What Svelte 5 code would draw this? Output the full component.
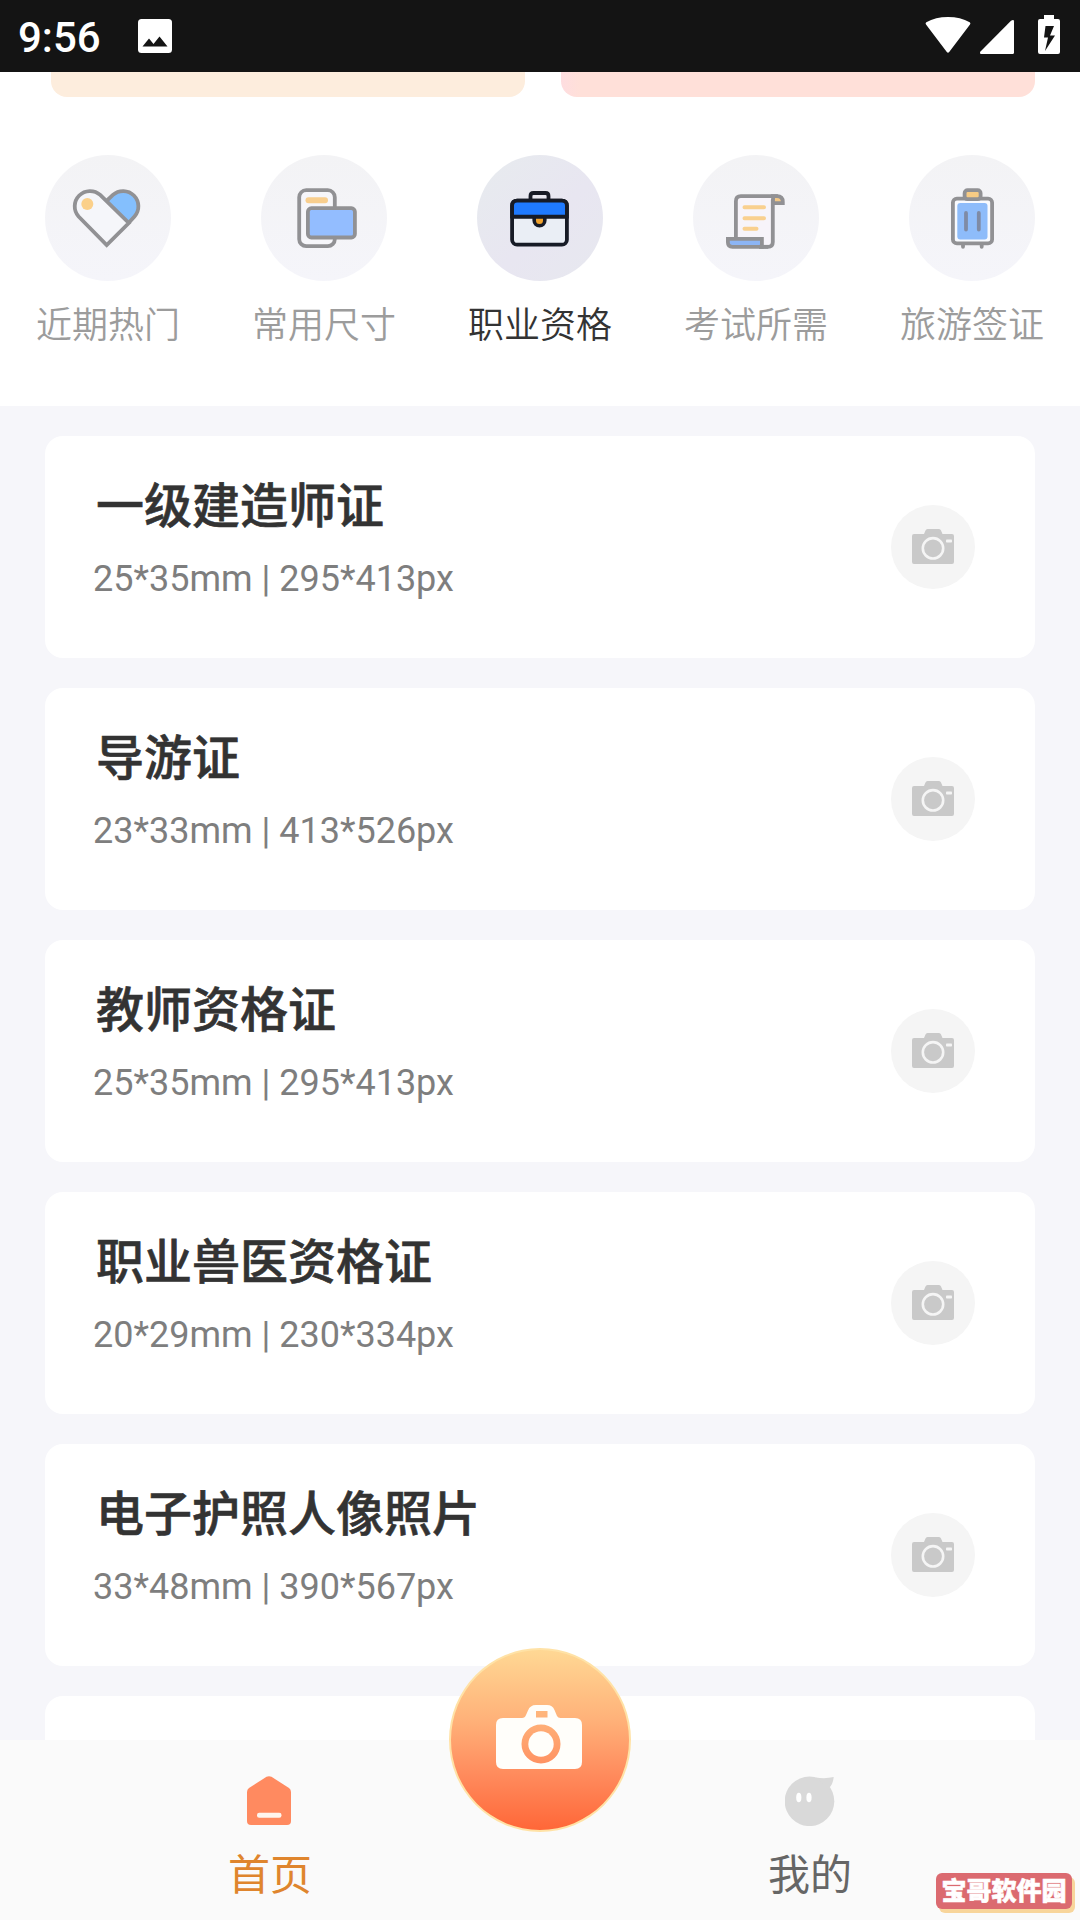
<script>
  let activeTab = 2;

  const tabs = [
    { icon: "heart", label: "近期热门" },
    { icon: "size", label: "常用尺寸" },
    { icon: "briefcase", label: "职业资格" },
    { icon: "scroll", label: "考试所需" },
    { icon: "luggage", label: "旅游签证" },
  ];

  const items = [
    { title: "一级建造师证", size: "25*35mm | 295*413px" },
    { title: "导游证", size: "23*33mm | 413*526px" },
    { title: "教师资格证", size: "25*35mm | 295*413px" },
    { title: "职业兽医资格证", size: "20*29mm | 230*334px" },
    { title: "电子护照人像照片", size: "33*48mm | 390*567px" },
  ];
</script>

<div class="screen">
  <header class="status-bar">
    <span class="time">9:56</span>
    <svg class="picture" width="34" height="34" viewBox="0 0 34 34">
      <rect width="34" height="34" rx="3.5" fill="#fff" />
      <path d="M4.5 27.5 L11 19.5 L15.5 25 L21.5 17.5 L29.5 27.5 Z" fill="#141414" />
    </svg>
    <svg class="system" width="136" height="40" viewBox="0 0 136 40">
      <path d="M1 9.5 Q0 8.3 1.3 7.3 Q10.500 2 23 2 Q35.500 2 44.7 7.3 Q46 8.300 45 9.500 L24.2 37 Q23 38.500 21.800 37 Z" />
      <path d="M56.500 39 Q54 39 55.500 36.500 L86 5.800 Q89 4 89 6.500 V37.500 Q89 39 87.500 39 Z" />
      <path fill-rule="evenodd" d="M119 0 H129 V4 H133 Q135 4 135 6 V37 Q135 39 133 39 H115 Q113 39 113 37 V6 Q113 4 115 4 H119 Z M120.500 11 L119 22.500 H123 L120 36 L130 20.500 H125 L129 11 Z" />
    </svg>
  </header>

  <section class="top">
    <div class="banners">
      <div class="banner orange"></div>
      <div class="banner pink"></div>
    </div>
    <nav class="tabs">
      {#each tabs as tab, i}
        <button class="tab" class:active={i === activeTab} on:click={() => (activeTab = i)}>
          <span class="tab-icon">
            <svg width="126" height="126" viewBox="0 0 126 126" fill="none" stroke="#919194" stroke-width="3.8">
              {#if tab.icon === "heart"}
                <path d="M61.500 46 L67.900 39.900 A15.300 15.300 0 0 1 89.500 61.500 L84 67.500" fill="#84bffd" />
                <path d="M33.600 61.500 A15.300 15.300 0 0 1 55.200 39.900 L83.800 68 L61.700 90 Z" fill="#f5f6fa" />
                <circle cx="42.300" cy="49" r="6" fill="#fbd08a" stroke="none" />
              {:else if tab.icon === "size"}
                <rect x="38.200" y="35.200" width="35.600" height="56" rx="7" fill="#f6f6fa" />
                <path d="M47.500 45.300 H64" stroke="#f8ce8e" stroke-width="6" stroke-linecap="round" />
                <rect x="46.900" y="53.200" width="47" height="29.300" rx="3.500" fill="#93bdff" />
              {:else if tab.icon === "briefcase"}
                <g stroke="#171b26">
                  <path d="M53.500 45 V41 Q53.500 38 56.500 38 H68.500 Q71.500 38 71.500 41 V45" />
                  <rect x="35.100" y="45.700" width="54.800" height="44" rx="5" fill="#eaeef5" />
                  <path d="M35.100 61.700 V50.700 Q35.100 45.700 40.100 45.700 H84.900 Q89.900 45.700 89.900 50.700 V61.700 Z" fill="#1f7aff" />
                  <path d="M57.200 61.700 V65.500 A5.300 5.300 0 0 0 67.800 65.500 V61.700 Z" fill="#f2a32d" stroke-width="3.600" />
                  <path d="M35 61.700 H90" stroke-width="3.400" />
                </g>
              {:else if tab.icon === "scroll"}
                <path d="M79.800 41.200 H84 Q89.800 41.200 89.800 47 V48.200 H79.800 Z" fill="#f3c887" />
                <path d="M42.900 84 V46.200 Q42.900 41.200 47.900 41.200 H81 Q79.800 42.500 79.800 45 V87 Q79.800 91.800 75 91.800 H66" fill="#f7f4fa" />
                <path d="M34.900 83.900 H68.900 V91.800 H39.500 Q34.900 91.800 34.900 87.300 Z" fill="#8cb5f5" />
                <path d="M66 91.800 H75" />
                <path d="M51.500 52.200 H71 M51.500 63.200 H71 M51.500 73.700 H63.500" stroke="#f9d08f" stroke-width="4" stroke-linecap="round" />
              {:else}
                <path d="M54 90 V91.800 M72.700 90 V91.800" stroke-linecap="round" />
                <rect x="43.900" y="43.600" width="39.200" height="44.800" rx="4" fill="#f8fafe" />
                <rect x="48.300" y="48" width="30.200" height="36.400" rx="3" fill="#8ebcfa" stroke="none" />
                <rect x="55.600" y="35.200" width="16" height="9" rx="3" fill="#f7cb84" />
                <path d="M57 58 V74.500 M69.800 58 V74.500" stroke="#7f8ba5" stroke-linecap="round" />
              {/if}
            </svg>
          </span>
          <span class="tab-label">{tab.label}</span>
        </button>
      {/each}
    </nav>
  </section>

  <main class="list">
    {#each items as item}
      <article class="card">
        <div class="info">
          <h2>{item.title}</h2>
          <p>{item.size}</p>
        </div>
        <span class="shoot">
          <svg width="42" height="35" viewBox="0 0 42 35">
            <path d="M2 5 H12 L13.500 1.500 Q14 0 15.500 0 H27 Q28.500 0 29 1.500 L30.500 5 H40 Q42 5 42 7 V33 Q42 35 40 35 H2 Q0 35 0 33 V7 Q0 5 2 5 Z" fill="#c9c9c9" />
            <circle cx="21" cy="19.300" r="10.200" fill="none" stroke="#f5f5f5" stroke-width="2.600" />
            <rect x="34" y="10.500" width="6" height="3" rx="0.800" fill="#f5f5f5" />
          </svg>
        </span>
      </article>
    {/each}
    <article class="card"></article>
  </main>

  <footer class="bottom-nav">
    <button class="nav-item home">
      <svg width="50" height="50" viewBox="0 0 50 50">
        <path d="M21.500 0.800 Q24 -0.500 26.500 0.800 L44 12 Q46 13.500 46 16 V45 Q46 49 42 49 H6 Q2 49 2 45 V16 Q2 13.500 4 12 Z" fill="#ff8a60" />
        <rect x="12" y="36.700" width="24.500" height="5" rx="2.200" fill="#fff5ee" />
      </svg>
      <span>首页</span>
    </button>
    <button class="nav-item">
      <svg width="50" height="50" viewBox="0 0 50 50" fill="#d9d9d9">
        <circle cx="24.500" cy="25.300" r="24.800" />
        <path d="M31 1.500 Q40 3 48.700 1 Q48 8 44.500 11.500 L46 15 Z" />
        <ellipse cx="13.800" cy="21.500" rx="2.600" ry="4.800" fill="#fff" />
        <ellipse cx="24" cy="21.500" rx="2.600" ry="4.800" fill="#fff" />
      </svg>
      <span>我的</span>
    </button>
    <button class="fab" aria-label="拍照">
      <svg width="86" height="64" viewBox="0 0 86 64">
        <path fill-rule="evenodd" d="M7 13 H26 Q29 13 30 10 L32 5.500 Q34 0 40 0 H51 Q56.500 0 58.500 5 L61 11 Q62 13 64.500 13 H79 Q86 13 86 20 V57 Q86 64 79 64 H7 Q0 64 0 57 V20 Q0 13 7 13 Z M40 6 V12.500 H51.500 V6 Z M45 19.500 A19.500 19.500 0 1 0 45 58.500 A19.500 19.500 0 1 0 45 19.500 Z" fill="#fffefa" />
        <circle cx="45" cy="39" r="12.700" fill="#fffefa" />
      </svg>
    </button>
  </footer>

  <div class="badge">宝哥软件园</div>
</div>

<style>
  :global(body) {
    background: #fff;
  }

  .screen {
    position: relative;
    display: flex;
    flex-direction: column;
    width: 1080px;
    height: 1920px;
    overflow: hidden;
    background: #f6f6fa;
    font-family: Roboto, "Noto Sans CJK SC", sans-serif;
  }

  button {
    padding: 0;
    border: none;
    background: none;
    font-family: inherit;
  }

  .status-bar {
    display: flex;
    align-items: center;
    flex: none;
    box-sizing: border-box;
    height: 72px;
    padding: 0 19px 0 18px;
    background: #141414;
    color: #fff;
  }

  .time {
    width: 120px;
    padding-top: 3px;
    font-size: 42px;
    font-weight: 500;
    line-height: 48px;
  }

  .system {
    margin: 0 0 2px auto;
    fill: #fff;
  }

  .top {
    flex: none;
    height: 334px;
    background: #fff;
  }

  .banners {
    display: flex;
    justify-content: space-between;
    padding: 0 45px 0 51px;
  }

  .banner {
    width: 474px;
    height: 25px;
    border-radius: 0 0 16px 16px;
  }

  .orange {
    background: #fdeddd;
  }

  .pink {
    background: linear-gradient(90deg, #fedde0, #ffe0d9 4%);
  }

  .tabs {
    display: grid;
    grid-template-columns: repeat(5, 1fr);
    padding-top: 58px;
  }

  .tab {
    display: flex;
    flex-direction: column;
    align-items: center;
    gap: 19px;
  }

  .tab-icon {
    width: 126px;
    height: 126px;
    border-radius: 50%;
    background: linear-gradient(180deg, #f3f3f5, #f5f5fa);
  }

  .active .tab-icon {
    background: linear-gradient(135deg, #e7ebee, #e8e6f1 55%, #e7e8ef);
  }

  .tab-label {
    color: #9c9c9c;
    font-size: 36px;
    font-weight: 350;
    line-height: 52px;
  }

  .active .tab-label {
    color: #333;
  }

  .list {
    display: flex;
    flex: 1;
    flex-direction: column;
    gap: 30px;
    min-height: 0;
    padding: 30px 45px 0;
    overflow: hidden;
  }

  .card {
    display: flex;
    flex: none;
    align-items: center;
    justify-content: space-between;
    box-sizing: border-box;
    height: 222px;
    padding: 0 60px 0 48px;
    border-radius: 18px;
    background: #fff;
  }

  .info {
    height: 146px;
  }

  h2 {
    margin: 0 0 0 3px;
    color: #333;
    font-size: 48px;
    font-weight: 500;
    line-height: 66px;
    -webkit-text-stroke: 0.6px #333;
  }

  p {
    margin: 17px 0 0;
    color: #7e7e7e;
    font-size: 36px;
    line-height: 44px;
  }

  .shoot {
    display: flex;
    align-items: center;
    justify-content: center;
    box-sizing: border-box;
    width: 84px;
    height: 84px;
    padding-bottom: 2px;
    border-radius: 50%;
    background: #f5f5f5;
  }

  .bottom-nav {
    position: relative;
    display: grid;
    grid-template-columns: 1fr 1fr;
    flex: none;
    height: 180px;
    background: #fafafa;
  }

  .nav-item {
    display: flex;
    flex-direction: column;
    align-items: center;
    gap: 20px;
    padding-top: 36px;
    color: #666;
    font-size: 42px;
    line-height: 60px;
  }

  .home {
    color: #df852d;
  }

  .fab {
    position: absolute;
    top: -92px;
    left: 449px;
    display: flex;
    align-items: center;
    justify-content: center;
    width: 182px;
    height: 184px;
    padding: 0 2px 6px 0;
    border: 2px solid #ffe2a6;
    border-radius: 50%;
    background: linear-gradient(180deg, #ffd894, #ffb078 40%, #ff8a5c 70%, #ff6738);
  }

  .badge {
    position: absolute;
    right: 8px;
    bottom: 11px;
    width: 136px;
    height: 36px;
    border-radius: 6px;
    background: #db6a70;
    box-shadow: 3px 4px 0 #f8d59b;
    color: #fff;
    font-size: 25px;
    font-weight: 900;
    line-height: 38px;
    text-align: center;
    -webkit-text-stroke: 0.6px #fff;
  }
</style>
